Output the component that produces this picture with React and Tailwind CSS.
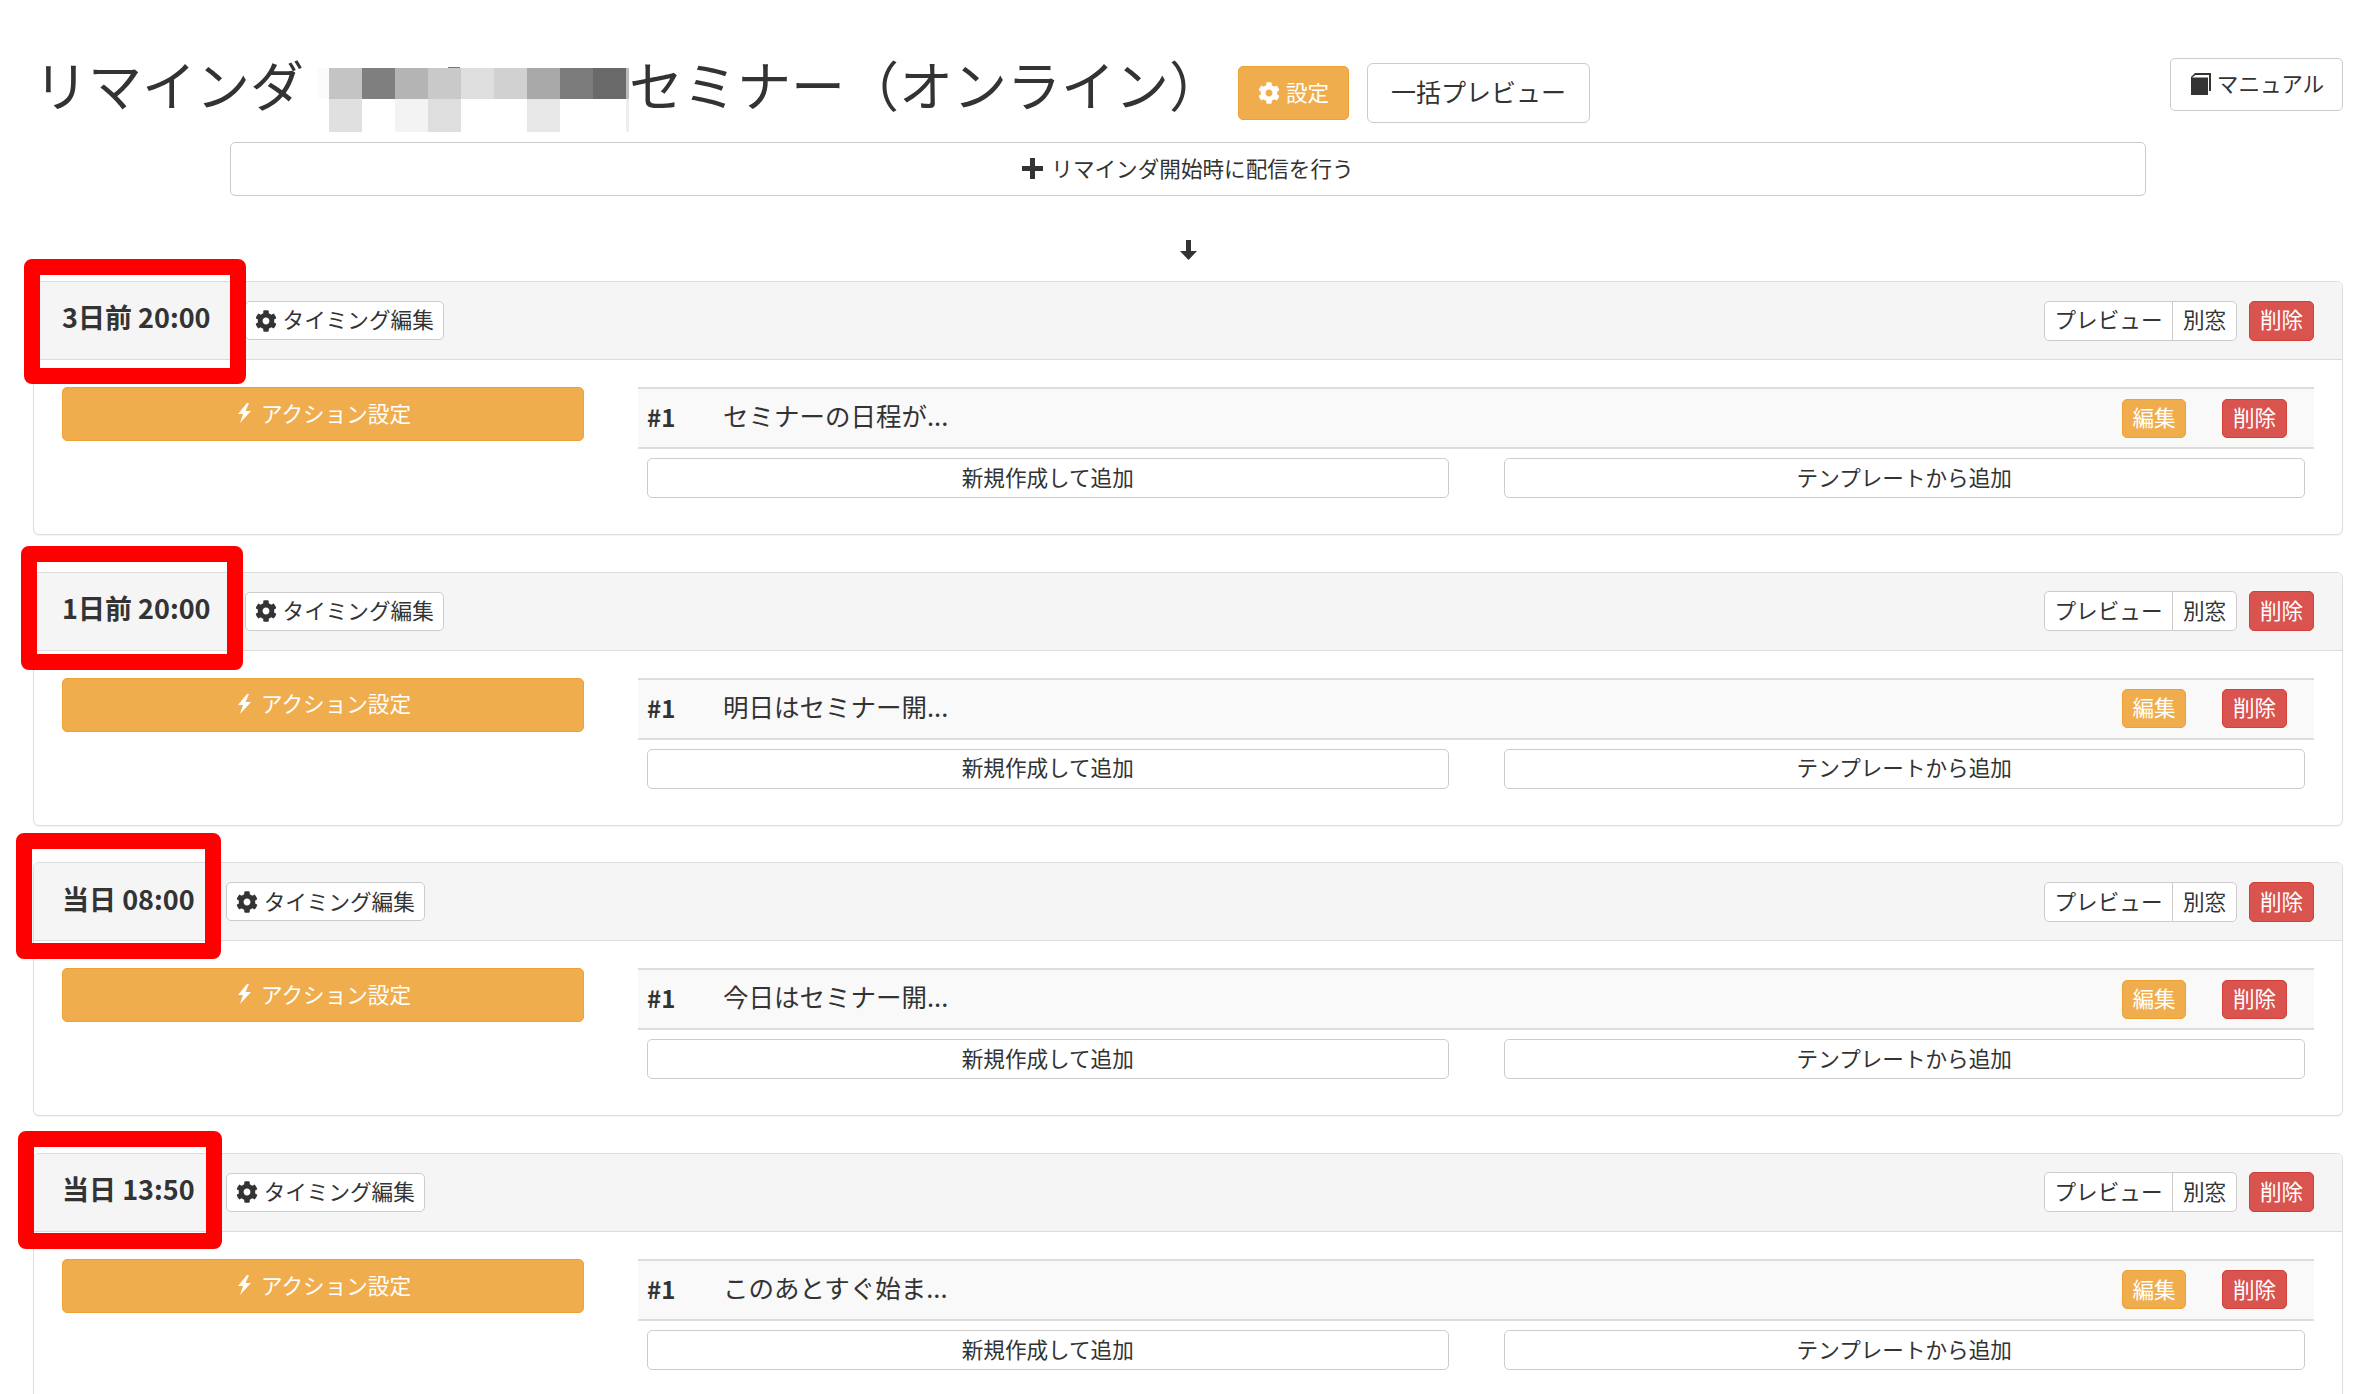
import { FaCog } from 'react-icons/fa';

const CARDS = [
  { time: '3日前 20:00', title: 'セミナーの日程が...', gap: 'ml-[34px]', mark: 'left-[-10px] top-[-23px] w-[222px] h-[125px]' },
  { time: '1日前 20:00', title: '明日はセミナー開...', gap: 'ml-[34px]', mark: 'left-[-13px] top-[-27px] w-[222px] h-[124px]' },
  { time: '当日 08:00', title: '今日はセミナー開...', gap: 'ml-[31px]', mark: 'left-[-18px] top-[-30px] w-[205px] h-[126px]' },
  { time: '当日 13:50', title: 'このあとすぐ始ま...', gap: 'ml-[31px]', mark: 'left-[-16px] top-[-23px] w-[204px] h-[118px]' },
];

const MOSAIC = [
  'bg-[#fbfbfb]', 'bg-[#c4c4c4]', 'bg-[#7f7f7f]', 'bg-[#b4b4b4]', 'bg-[#c9c9c9]', 'bg-[#dedede]', 'bg-[#d1d1d1]', 'bg-[#a8a8a8]', 'bg-[#7b7b7b]', 'bg-[#696969]', 'bg-[#bbbbbb]',
  'bg-white', 'bg-[#e0e0e0]', 'bg-white', 'bg-[#f3f3f3]', 'bg-[#dedede]', 'bg-white', 'bg-white', 'bg-[#e7e7e7]', 'bg-white', 'bg-white', 'bg-[#eeeeee]',
];

function BookIcon() {
  return (
    <svg width="20" height="22" viewBox="0 0 20 22" fill="#333">
      <path d="M4 0h16v18h-2V2H4.500L1 4.500H17V22H0V4z" />
    </svg>
  );
}

function ArrowDownIcon() {
  return (
    <svg width="17" height="20" viewBox="0 0 17 20" fill="#333">
      <path d="M6 0h5v11h6l-8.500 9L0 11h6z" />
    </svg>
  );
}

function PlusIcon() {
  return (
    <svg width="21" height="21" viewBox="0 0 21 21" fill="#333">
      <path d="M8 0h5v8h8v5h-8v8H8v-8H0V8h8z" />
    </svg>
  );
}

function BoltIcon() {
  return (
    <svg width="14" height="20" viewBox="0 0 14 20" fill="currentColor">
      <path d="M10 0L1 11h5L3 20 14 8H8.500L12 0z" />
    </svg>
  );
}

function Card({ card }) {
  return (
    <div className="relative h-[254px] shrink-0 rounded-[6px] border border-[#ddd] bg-white shadow-[0_1px_1px_rgba(0,0,0,0.05)]">
      <div className="flex h-[78px] items-center rounded-t-[6px] border-b border-[#ddd] bg-[#f5f5f5] pl-[28px] pr-[28px]">
        <span className="mt-[-6px] text-[27px] font-bold">{card.time}</span>
        <button className={`${card.gap} flex h-[39px] items-center gap-[6px] rounded-[5px] border border-[#ccc] bg-white pb-[2px] pl-[9px] pr-[9px] text-[21.6px]`}>
          <FaCog size={22} className="mt-[2px]" /> タイミング編集
        </button>
        <div className="ml-auto flex h-[40px] items-stretch rounded-[5px] border border-[#ccc] bg-white text-[21.6px]">
          <span className="flex w-[128px] items-center justify-center border-r border-[#ccc] pb-[2px]">プレビュー</span>
          <span className="flex w-[63px] items-center justify-center pb-[2px]">別窓</span>
        </div>
        <button className="ml-[12px] flex h-[40px] w-[65px] items-center justify-center rounded-[5px] border border-[#d43f3a] bg-[#d9534f] pb-[2px] text-[21.6px] text-white">削除</button>
      </div>
      <div className="flex gap-[54px] pl-[28px] pr-[28px] pt-[27px]">
        <button className="flex h-[54px] w-[522px] shrink-0 items-center justify-center gap-[10px] rounded-[5px] border border-[#eea236] bg-[#f0ad4e] pb-[2px] pl-[2px] text-[21.6px] text-white">
          <BoltIcon /> アクション設定
        </button>
        <div className="min-w-0 flex-1">
          <div className="flex h-[62px] items-center border-y-2 border-[#ddd] bg-[#f9f9f9] pl-[9px] pr-[27px]">
            <span className="mt-[-2px] w-[76px] text-[24px] font-bold">#1</span>
            <span className="mt-[-6px] text-[25.5px]">{card.title}</span>
            <button className="ml-auto flex h-[39px] w-[64px] items-center justify-center rounded-[5px] border border-[#eea236] bg-[#f0ad4e] pb-[2px] text-[21.6px] text-white">編集</button>
            <button className="ml-[36px] flex h-[39px] w-[65px] items-center justify-center rounded-[5px] border border-[#d43f3a] bg-[#d9534f] pb-[2px] text-[21.6px] text-white">削除</button>
          </div>
          <div className="mt-[9px] flex gap-[55px] px-[9px]">
            <button className="flex h-[40px] flex-1 items-center justify-center rounded-[5px] border border-[#ccc] bg-white pb-[2px] text-[21.6px]">新規作成して追加</button>
            <button className="flex h-[40px] flex-1 items-center justify-center rounded-[5px] border border-[#ccc] bg-white pb-[2px] text-[21.6px]">テンプレートから追加</button>
          </div>
        </div>
      </div>
      <div className={`pointer-events-none absolute rounded-[8px] border-[16px] border-[#ff0000] ${card.mark}`} />
    </div>
  );
}

export default function App() {
  return (
    <div className="h-[1394px] overflow-hidden bg-white font-['Noto_Sans_CJK_JP',sans-serif] text-[#333]">
      <div className="flex h-[142px] items-start pl-[34px] pr-[25px]">
        <h1 className="mt-[48px] text-[54px] leading-[72px]">リマインダ</h1>
        <div className="relative ml-[14px] mt-[68px] grid grid-cols-[11px_repeat(9,33px)_3px] grid-rows-[31px_33px]">
          {MOSAIC.map((c, i) => <div key={i} className={c} />)}
          <div className="absolute left-[130px] top-[-1px] h-[1px] w-[12px] bg-[#777]" />
        </div>
        <h1 className="mt-[48px] text-[54px] leading-[72px]">セミナー（オンライン）</h1>
        <button className="ml-[15px] mt-[66px] flex h-[54px] w-[111px] items-center justify-center gap-[6px] rounded-[5px] border border-[#eea236] bg-[#f0ad4e] pb-[2px] text-[21.6px] text-white">
          <FaCog size={22} className="mt-[2px]" /> 設定
        </button>
        <button className="ml-[18px] mt-[63px] flex h-[60px] w-[223px] items-center justify-center rounded-[6px] border border-[#ccc] bg-white pb-[2px] text-[25px]">一括プレビュー</button>
        <button className="ml-auto mt-[58px] flex h-[53px] w-[173px] items-center justify-center gap-[6px] rounded-[5px] border border-[#ccc] bg-white pb-[2px] pl-[2px] text-[21.6px]">
          <BookIcon /> マニュアル
        </button>
      </div>
      <div className="ml-[230px] w-[1916px]">
        <button className="flex h-[54px] w-full items-center justify-center gap-[8px] rounded-[5px] border border-[#ccc] bg-white pb-[2px] text-[21.6px]">
          <PlusIcon /> リマインダ開始時に配信を行う
        </button>
        <div className="mt-[44px] flex justify-center">
          <ArrowDownIcon />
        </div>
      </div>
      <div className="ml-[33px] mt-[21px] flex w-[2310px] flex-col gap-[36.67px]">
        {CARDS.map(card => <Card key={card.time} card={card} />)}
      </div>
    </div>
  );
}
